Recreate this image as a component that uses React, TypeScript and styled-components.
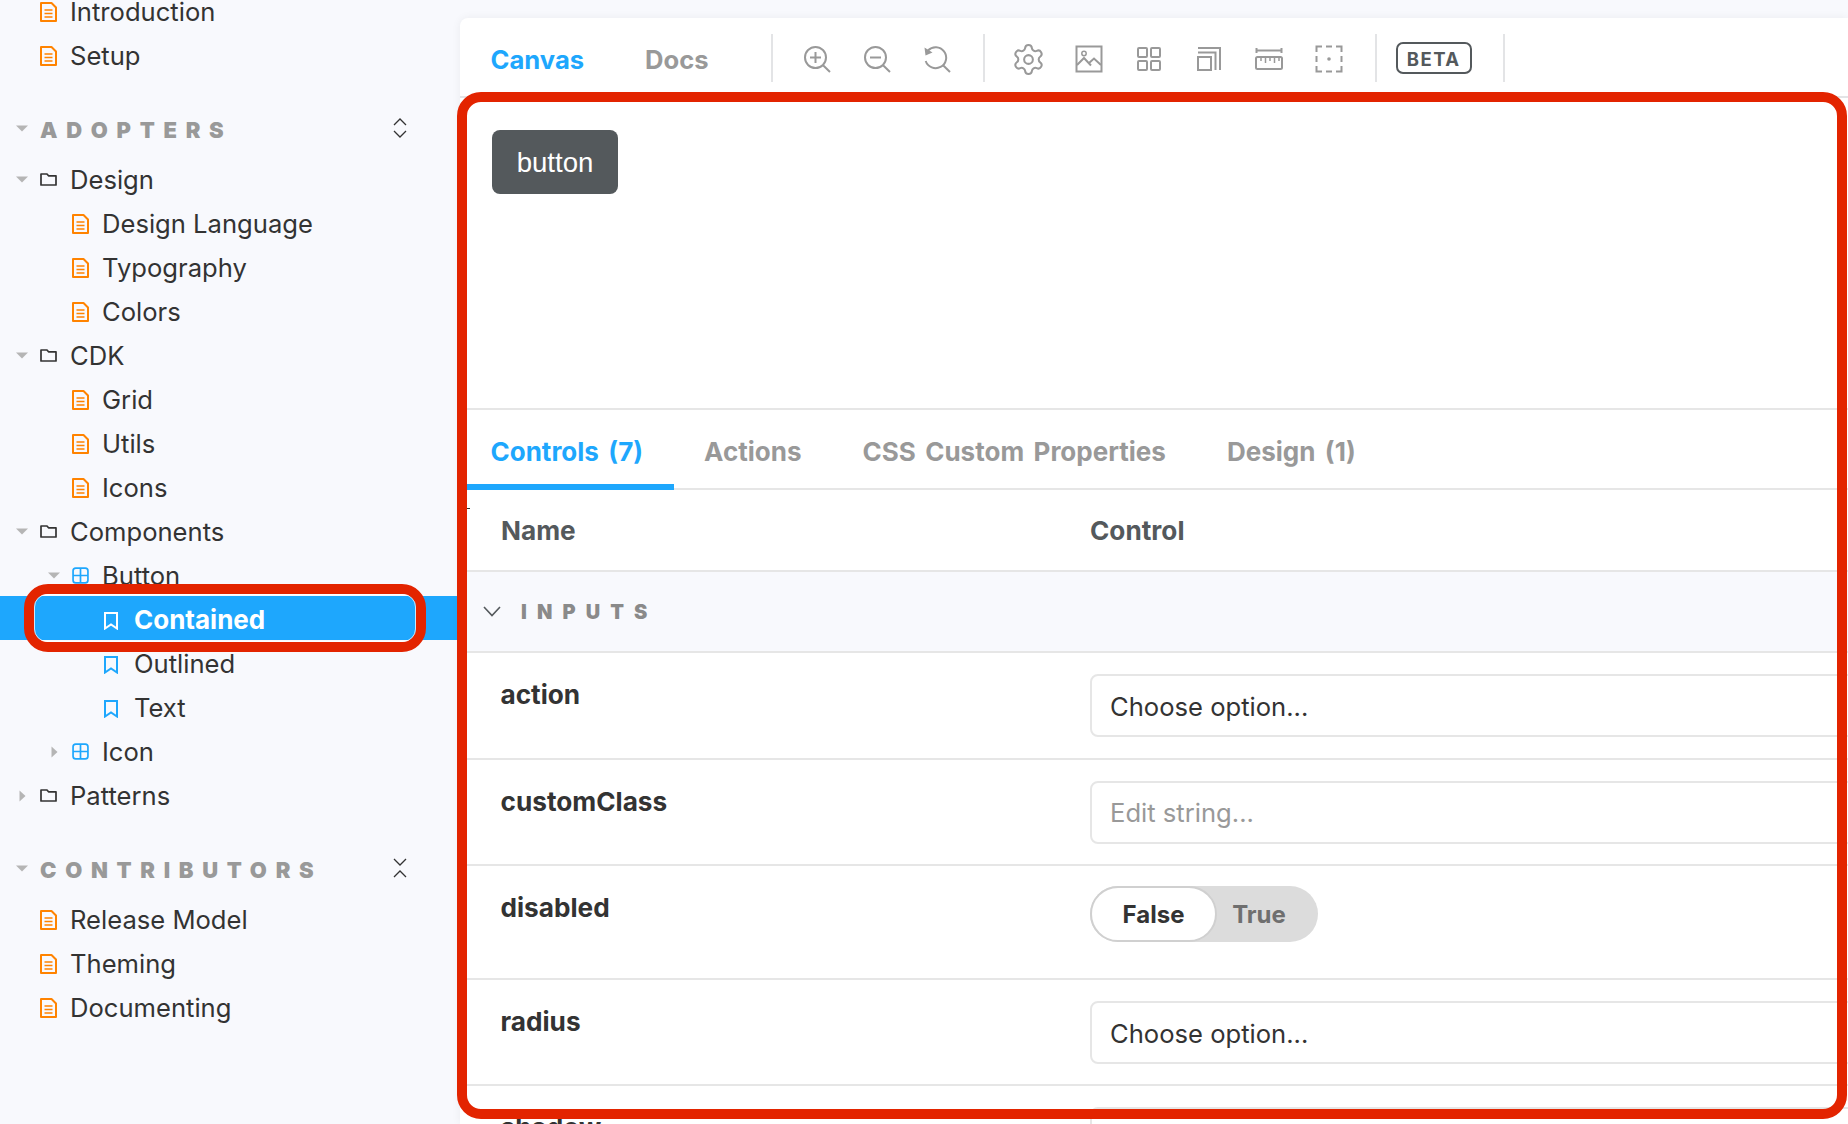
import React from "react";
import styled, { createGlobalStyle } from "styled-components";
import { Settings } from "lucide-react";

const Global = createGlobalStyle`
  html, body { margin: 0; padding: 0; background: #f8f9fd; }
  body { font-family: Inter, "Liberation Sans", sans-serif; color: #333; -webkit-font-smoothing: antialiased; }
`;

const Page = styled.div`
  position: relative;
  width: 1848px;
  height: 1124px;
  overflow: hidden;
  display: flex;
  background: #f8f9fd;
`;

const Sidebar = styled.nav`
  flex: 0 0 460px;
  width: 460px;
  margin-top: -12px;
`;

const Section = styled.section`
  margin-bottom: 31px;
`;

const SectionHead = styled.div`
  height: 44px;
  box-sizing: border-box;
  margin-bottom: 5px;
  padding: 2px 53px 0 16px;
  display: flex;
  align-items: center;
`;

const SectionTitle = styled.span`
  flex: 1;
  font-size: 22px;
  font-weight: 900;
  letter-spacing: 8.7px;
  color: #999;
  text-transform: uppercase;
`;

const HeadCaret = styled.span`
  flex: 0 0 24px;
  display: flex;
  align-items: center;
  margin-top: -4px;
`;

const HeadAction = styled.span`
  display: flex;
  margin-top: -4px;
`;

const Row = styled.div<{ $level: number; $selected?: boolean }>`
  height: 44px;
  box-sizing: border-box;
  padding: 2px 0 0 ${(p) => 16 + p.$level * 32}px;
  display: flex;
  align-items: center;
  font-size: ${(p) => (p.$selected ? 26 : 25.6)}px;
  font-weight: ${(p) => (p.$selected ? 700 : 400)};
  color: ${(p) => (p.$selected ? "#fff" : "#333")};
  background: ${(p) => (p.$selected ? "#1ea7fd" : "transparent")};
`;

const ArrowSlot = styled.span`
  flex: 0 0 24px;
  margin-top: 1px;
  display: flex;
  align-items: center;
`;

const IconSlot = styled.span<{ $drop?: number }>`
  flex: 0 0 30px;
  margin-top: ${(p) => p.$drop ?? 1}px;
  display: flex;
  align-items: center;
`;

const Main = styled.main`
  flex: 1;
  min-width: 0;
  margin-top: 18px;
  background: #fff;
  border-top-left-radius: 8px;
  box-shadow: 0 0 10px rgba(0, 0, 0, 0.06);
  overflow: hidden;
`;

const Toolbar = styled.header`
  height: 80px;
  box-sizing: border-box;
  padding-top: 2px;
  border-bottom: 2px solid #e3e4e6;
  display: flex;
  align-items: center;
`;

const Tab = styled.div<{ $active?: boolean }>`
  height: 100%;
  box-sizing: border-box;
  padding: 2px 30.5px 0;
  display: flex;
  align-items: center;
  font-size: 25.6px;
  font-weight: 700;
  color: ${(p) => (p.$active ? "#1ea7fd" : "#999")};
  white-space: nowrap;
`;

const ToolDivider = styled.span`
  flex: 0 0 2px;
  height: 48px;
  background: #e3e4e6;
`;

const FirstDivider = styled(ToolDivider)`
  margin-left: 31.5px;
`;

const IconGroup = styled.div`
  display: flex;
  padding: 0 16px 0 14px;
`;

const Tool = styled.span`
  flex: 0 0 60px;
  height: 32px;
  margin-top: 2px;
  display: flex;
  align-items: center;
  justify-content: center;
  color: #999;
`;

const Beta = styled.span`
  box-sizing: border-box;
  margin: 0 31px 0 19px;
  width: 76px;
  height: 32px;
  border: 2px solid #54595c;
  border-radius: 7px;
  padding-top: 1px;
  display: flex;
  align-items: center;
  justify-content: center;
  font-size: 18.5px;
  font-weight: 700;
  letter-spacing: 1.4px;
  color: #54595c;
`;

const Canvas = styled.div`
  height: 312px;
  box-sizing: border-box;
  padding: 32px;
  border-bottom: 2px solid #e6e6e6;
`;

const DemoButton = styled.button`
  display: block;
  width: 126px;
  height: 64px;
  padding: 2px 0 0;
  border: 0;
  border-radius: 8px;
  background: #54595c;
  color: #fff;
  font-family: "Liberation Sans", Arial, sans-serif;
  font-size: 27.6px;
`;

const PanelTabs = styled.div`
  height: 80px;
  box-sizing: border-box;
  border-bottom: 2px solid #e6e6e6;
  display: flex;
`;

const PanelTab = styled(Tab)`
  height: 80px;
  font-size: 26px;
  word-spacing: 3.3px;
  border-bottom: ${(p) => (p.$active ? "6px solid #1ea7fd" : "0")};
  padding-top: ${(p) => (p.$active ? "8px" : "2px")};
`;

const TableHead = styled.div`
  height: 82px;
  box-sizing: border-box;
  border-bottom: 2px solid #e6e6e6;
  display: grid;
  grid-template-columns: 589px 1fr;
  align-items: center;
  padding-left: 41px;
  font-size: 26.2px;
  font-weight: 700;
  color: #54595c;
`;

const GroupRow = styled.div`
  height: 81px;
  box-sizing: border-box;
  border-bottom: 2px solid #e6e6e6;
  background: #f8f9fd;
  display: flex;
  align-items: center;
  padding-left: 23px;
  gap: 20px;
`;

const GroupTitle = styled.span`
  font-size: 20px;
  font-weight: 900;
  letter-spacing: 10.1px;
  color: #8a8a8a;
  text-transform: uppercase;
`;

const PropRow = styled.div<{ $h: number }>`
  height: ${(p) => p.$h}px;
  box-sizing: border-box;
  border-bottom: 2px solid #e6e6e6;
  padding: 21px 0 0 40.5px;
  display: grid;
  grid-template-columns: 589.5px 1fr;
  align-items: start;
`;

const PropName = styled.div`
  padding-top: 3px;
  font-size: 26.2px;
  line-height: 36px;
  font-weight: 700;
  color: #333;
`;

const Field = styled.div<{ $placeholder?: boolean }>`
  width: 900px;
  height: 63px;
  box-sizing: border-box;
  border: 2px solid #e6e6e6;
  border-radius: 8px;
  padding: ${(p) => (p.$placeholder ? "0" : "2px")} 0 0 18px;
  display: flex;
  align-items: center;
  font-size: 25.6px;
  color: ${(p) => (p.$placeholder ? "#999" : "#333")};
`;

const Toggle = styled.div`
  margin-top: -1px;
  width: 228px;
  height: 56px;
  border-radius: 28px;
  background: #dcdcdc;
  display: flex;
  align-items: center;
  font-size: 24px;
  font-weight: 700;
`;

const ToggleOn = styled.span`
  box-sizing: border-box;
  flex: 0 0 127px;
  height: 56px;
  border: 2px solid #d0d0d0;
  border-radius: 28px;
  background: #fff;
  color: #333;
  display: flex;
  align-items: center;
  justify-content: center;
`;

const ToggleOff = styled.span`
  flex: 1;
  padding-right: 17px;
  text-align: center;
  color: #6f6f6f;
`;

const Highlight = styled.div`
  position: absolute;
  box-sizing: border-box;
  border: 10px solid #e32400;
  pointer-events: none;
`;

const PanelHighlight = styled(Highlight)`
  left: 457px;
  top: 92px;
  width: 1390px;
  height: 1027px;
  border-radius: 24px;
`;

const RowHighlight = styled(Highlight)`
  left: 24px;
  top: 584px;
  width: 402px;
  height: 68px;
  border-width: 10.5px;
  border-radius: 24px;
  &::after {
    content: "";
    position: absolute;
    inset: 0;
    border: 1px solid rgba(255, 255, 255, 0.75);
    border-radius: 13px;
  }
`;

const Tick = styled.span`
  position: absolute;
  left: 467px;
  top: 508px;
  width: 3px;
  height: 1px;
  background: #333;
`;

const Caret = ({ open }: { open: boolean }) =>
  open ? (
    <svg width="12" height="7" viewBox="0 0 12 7"><path d="M0 0.5H12L6 6.5Z" fill="#b5b5b5" /></svg>
  ) : (
    <svg width="12" height="12" viewBox="0 0 12 12"><path d="M3.5 0.5V11.5L9.5 6Z" fill="#b5b5b5" /></svg>
  );

const DocIcon = () => (
  <svg width="17" height="20" viewBox="0 0 17 20" fill="none" stroke="#ff8300" strokeWidth="2">
    <path d="M1 1H11.5L16 5.5V19H1Z" strokeLinejoin="round" />
    <path d="M4.5 8H12.5M4.5 11.5H12.5M4.5 15H12.5" strokeWidth="1.6" />
  </svg>
);

const FolderIcon = () => (
  <svg width="17" height="13" viewBox="0 0 17 13" fill="none" stroke="#333" strokeWidth="1.7">
    <path d="M1 1H7L8.5 2.8H16V12H1Z" strokeLinejoin="round" />
  </svg>
);

const ComponentIcon = () => (
  <svg width="17" height="17" viewBox="0 0 16 16" fill="none" stroke="#1ea7fd" strokeWidth="1.6">
    <rect x="1" y="1" width="14" height="14" rx="2.5" />
    <path d="M8 1V15M1 8H15" />
  </svg>
);

const BookmarkIcon = ({ color }: { color: string }) => (
  <svg width="14" height="18" viewBox="0 0 14 18" fill="none" stroke={color} strokeWidth="2">
    <path d="M1 1H13V16.5L7 12.5L1 16.5Z" strokeLinejoin="miter" />
  </svg>
);

const ExpandIcon = () => (
  <svg width="14" height="20" viewBox="0 0 14 20" fill="none" stroke="#333" strokeWidth="1.3">
    <path d="M1 7L7 1L13 7M1 13L7 19L13 13" />
  </svg>
);

const CollapseIcon = () => (
  <svg width="14" height="20" viewBox="0 0 14 20" fill="none" stroke="#333" strokeWidth="1.3">
    <path d="M1 1L7 7L13 1M1 19L7 13L13 19" />
  </svg>
);

const Svg = ({ children, w = 28 }: { children: React.ReactNode; w?: number }) => (
  <svg width={w} height={w} viewBox="0 0 28 28" fill="none" stroke="currentColor" strokeWidth="2">
    {children}
  </svg>
);

const ZoomIn = () => (
  <Svg>
    <circle cx="12.5" cy="12.5" r="10.5" />
    <path d="M19.8 20L27 27M7 12.5H18M12.5 7V18" />
  </Svg>
);
const ZoomOut = () => (
  <Svg>
    <circle cx="12.5" cy="12.5" r="10.5" />
    <path d="M19.8 20L27 27M7 12.5H18" />
  </Svg>
);
const ZoomReset = () => (
  <Svg>
    <path d="M5 5.5A10.5 10.5 0 1 1 2.7 16" />
    <path d="M19.8 20L27 27" />
    <path d="M1.5 2.5L2.5 10.5L9.5 7.5Z" fill="currentColor" stroke="none" />
  </Svg>
);
const ImageIcon = () => (
  <Svg>
    <rect x="1.5" y="1.5" width="25" height="25" />
    <circle cx="9" cy="8.5" r="2.2" strokeWidth="1.5" />
    <path d="M2 20L9 13L16 20.5M14 18L19 13.5L26 20" />
  </Svg>
);
const GridIcon = () => (
  <Svg>
    <rect x="3" y="3" width="9" height="9" rx="1" />
    <rect x="16" y="3" width="9" height="9" rx="1" />
    <rect x="3" y="16" width="9" height="9" rx="1" />
    <rect x="16" y="16" width="9" height="9" rx="1" />
  </Svg>
);
const OutlineIcon = () => (
  <Svg>
    <rect x="3" y="12" width="13" height="13" />
    <path d="M3 7.5H20.5V25M3 3H25V25" />
  </Svg>
);
const RulerIcon = () => (
  <Svg>
    <path d="M1.5 3V8M26.5 3V8M1.5 5.5H26.5" />
    <rect x="1" y="12" width="26" height="12" rx="1.5" />
    <path d="M6 12V16M10.5 12V18M15 12V16M19.5 12V18M24 12V16" strokeWidth="1.5" />
  </Svg>
);
const TargetIcon = () => (
  <Svg>
    <path d="M1.5 7V1.5H7M11 1.5H17M21 1.5H26.5V7M26.5 11V17M26.5 21V26.5H21M17 26.5H11M7 26.5H1.5V21M1.5 17V11" />
    <circle cx="14" cy="14" r="1.8" fill="currentColor" stroke="none" />
  </Svg>
);

type Kind = "doc" | "folder" | "component" | "story";
type Item = { label: string; kind: Kind; level: number; caret?: "open" | "closed"; selected?: boolean };

const top: Item[] = [
  { label: "Introduction", kind: "doc", level: 0 },
  { label: "Setup", kind: "doc", level: 0 },
];

const adopters: Item[] = [
  { label: "Design", kind: "folder", level: 0, caret: "open" },
  { label: "Design Language", kind: "doc", level: 1 },
  { label: "Typography", kind: "doc", level: 1 },
  { label: "Colors", kind: "doc", level: 1 },
  { label: "CDK", kind: "folder", level: 0, caret: "open" },
  { label: "Grid", kind: "doc", level: 1 },
  { label: "Utils", kind: "doc", level: 1 },
  { label: "Icons", kind: "doc", level: 1 },
  { label: "Components", kind: "folder", level: 0, caret: "open" },
  { label: "Button", kind: "component", level: 1, caret: "open" },
  { label: "Contained", kind: "story", level: 2, selected: true },
  { label: "Outlined", kind: "story", level: 2 },
  { label: "Text", kind: "story", level: 2 },
  { label: "Icon", kind: "component", level: 1, caret: "closed" },
  { label: "Patterns", kind: "folder", level: 0, caret: "closed" },
];

const contributors: Item[] = [
  { label: "Release Model", kind: "doc", level: 0 },
  { label: "Theming", kind: "doc", level: 0 },
  { label: "Documenting", kind: "doc", level: 0 },
];

const TreeRow = ({ item }: { item: Item }) => (
  <Row $level={item.level} $selected={item.selected}>
    <ArrowSlot>{item.caret && <Caret open={item.caret === "open"} />}</ArrowSlot>
    <IconSlot $drop={item.kind === "story" ? 3 : 1}>
      {item.kind === "doc" && <DocIcon />}
      {item.kind === "folder" && <FolderIcon />}
      {item.kind === "component" && <ComponentIcon />}
      {item.kind === "story" && <BookmarkIcon color={item.selected ? "#fff" : "#1ea7fd"} />}
    </IconSlot>
    {item.label}
  </Row>
);

const GroupChevron = () => (
  <svg width="18" height="11" viewBox="0 0 18 11" fill="none" stroke="#54595c" strokeWidth="1.6">
    <path d="M1 1L9 9.5L17 1" />
  </svg>
);

export default function App() {
  return (
    <Page>
      <Global />
      <Sidebar>
        <Section>
          {top.map((i) => <TreeRow key={i.label} item={i} />)}
        </Section>
        <Section>
          <SectionHead>
            <HeadCaret><Caret open /></HeadCaret>
            <SectionTitle>Adopters</SectionTitle>
            <HeadAction><ExpandIcon /></HeadAction>
          </SectionHead>
          {adopters.map((i) => <TreeRow key={i.label} item={i} />)}
        </Section>
        <Section>
          <SectionHead>
            <HeadCaret><Caret open /></HeadCaret>
            <SectionTitle>Contributors</SectionTitle>
            <HeadAction><CollapseIcon /></HeadAction>
          </SectionHead>
          {contributors.map((i) => <TreeRow key={i.label} item={i} />)}
        </Section>
      </Sidebar>
      <Main>
        <Toolbar>
          <Tab $active>Canvas</Tab>
          <Tab>Docs</Tab>
          <FirstDivider />
          <IconGroup>
            <Tool><ZoomIn /></Tool>
            <Tool><ZoomOut /></Tool>
            <Tool><ZoomReset /></Tool>
          </IconGroup>
          <ToolDivider />
          <IconGroup>
            <Tool><Settings size={35} strokeWidth={1.4} /></Tool>
            <Tool><ImageIcon /></Tool>
            <Tool><GridIcon /></Tool>
            <Tool><OutlineIcon /></Tool>
            <Tool><RulerIcon /></Tool>
            <Tool><TargetIcon /></Tool>
          </IconGroup>
          <ToolDivider />
          <Beta>BETA</Beta>
          <ToolDivider />
        </Toolbar>
        <Canvas>
          <DemoButton>button</DemoButton>
        </Canvas>
        <PanelTabs>
          <PanelTab $active>Controls (7)</PanelTab>
          <PanelTab>Actions</PanelTab>
          <PanelTab>CSS Custom Properties</PanelTab>
          <PanelTab>Design (1)</PanelTab>
        </PanelTabs>
        <TableHead>
          <span>Name</span>
          <span>Control</span>
        </TableHead>
        <GroupRow>
          <GroupChevron />
          <GroupTitle>Inputs</GroupTitle>
        </GroupRow>
        <PropRow $h={107}>
          <PropName>action</PropName>
          <Field>Choose option...</Field>
        </PropRow>
        <PropRow $h={106}>
          <PropName>customClass</PropName>
          <Field $placeholder>Edit string...</Field>
        </PropRow>
        <PropRow $h={114}>
          <PropName>disabled</PropName>
          <Toggle>
            <ToggleOn>False</ToggleOn>
            <ToggleOff>True</ToggleOff>
          </Toggle>
        </PropRow>
        <PropRow $h={106}>
          <PropName>radius</PropName>
          <Field>Choose option...</Field>
        </PropRow>
        <PropRow $h={106}>
          <PropName>shadow</PropName>
          <Field>Choose option...</Field>
        </PropRow>
      </Main>
      <PanelHighlight />
      <RowHighlight />
      <Tick />
    </Page>
  );
}
